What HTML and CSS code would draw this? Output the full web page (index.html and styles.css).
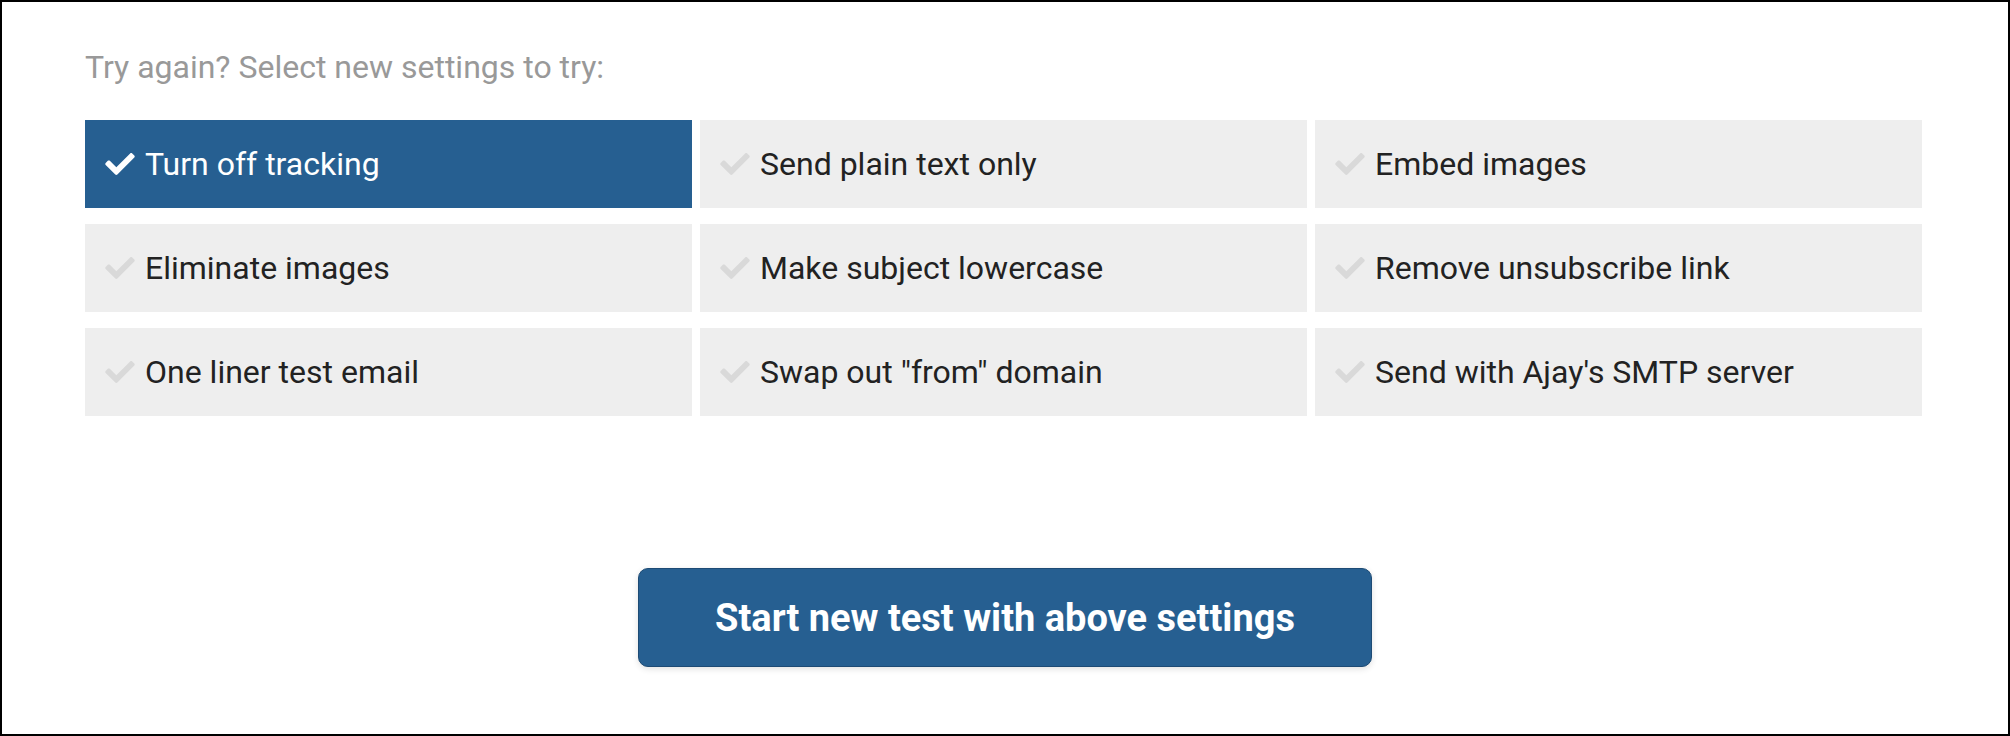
FILE: index.html
```html
<!DOCTYPE html>
<html>
<head>
<meta charset="utf-8">
<link rel="stylesheet" href="styles.css">
</head>
<body>
<div class="frame">
  <div class="content">
    <p class="title">Try again? Select new settings to try:</p>
    <div class="options">
      <div class="option selected"><svg class="check" viewBox="0 65 512 382"><path d="M173.898 439.404l-166.4-166.4c-9.997-9.997-9.997-26.206 0-36.204l36.203-36.204c9.997-9.998 26.207-9.998 36.204 0L192 312.69 432.095 72.596c9.997-9.997 26.207-9.997 36.204 0l36.203 36.204c9.997 9.997 9.997 26.206 0 36.204l-294.4 294.401c-9.998 9.997-26.207 9.997-36.204-.001z"/></svg><span>Turn off tracking</span></div>
      <div class="option"><svg class="check" viewBox="0 65 512 382"><path d="M173.898 439.404l-166.4-166.4c-9.997-9.997-9.997-26.206 0-36.204l36.203-36.204c9.997-9.998 26.207-9.998 36.204 0L192 312.69 432.095 72.596c9.997-9.997 26.207-9.997 36.204 0l36.203 36.204c9.997 9.997 9.997 26.206 0 36.204l-294.4 294.401c-9.998 9.997-26.207 9.997-36.204-.001z"/></svg><span>Send plain text only</span></div>
      <div class="option"><svg class="check" viewBox="0 65 512 382"><path d="M173.898 439.404l-166.4-166.4c-9.997-9.997-9.997-26.206 0-36.204l36.203-36.204c9.997-9.998 26.207-9.998 36.204 0L192 312.69 432.095 72.596c9.997-9.997 26.207-9.997 36.204 0l36.203 36.204c9.997 9.997 9.997 26.206 0 36.204l-294.4 294.401c-9.998 9.997-26.207 9.997-36.204-.001z"/></svg><span>Embed images</span></div>
      <div class="option"><svg class="check" viewBox="0 65 512 382"><path d="M173.898 439.404l-166.4-166.4c-9.997-9.997-9.997-26.206 0-36.204l36.203-36.204c9.997-9.998 26.207-9.998 36.204 0L192 312.69 432.095 72.596c9.997-9.997 26.207-9.997 36.204 0l36.203 36.204c9.997 9.997 9.997 26.206 0 36.204l-294.4 294.401c-9.998 9.997-26.207 9.997-36.204-.001z"/></svg><span>Eliminate images</span></div>
      <div class="option"><svg class="check" viewBox="0 65 512 382"><path d="M173.898 439.404l-166.4-166.4c-9.997-9.997-9.997-26.206 0-36.204l36.203-36.204c9.997-9.998 26.207-9.998 36.204 0L192 312.69 432.095 72.596c9.997-9.997 26.207-9.997 36.204 0l36.203 36.204c9.997 9.997 9.997 26.206 0 36.204l-294.4 294.401c-9.998 9.997-26.207 9.997-36.204-.001z"/></svg><span>Make subject lowercase</span></div>
      <div class="option"><svg class="check" viewBox="0 65 512 382"><path d="M173.898 439.404l-166.4-166.4c-9.997-9.997-9.997-26.206 0-36.204l36.203-36.204c9.997-9.998 26.207-9.998 36.204 0L192 312.69 432.095 72.596c9.997-9.997 26.207-9.997 36.204 0l36.203 36.204c9.997 9.997 9.997 26.206 0 36.204l-294.4 294.401c-9.998 9.997-26.207 9.997-36.204-.001z"/></svg><span>Remove unsubscribe link</span></div>
      <div class="option"><svg class="check" viewBox="0 65 512 382"><path d="M173.898 439.404l-166.4-166.4c-9.997-9.997-9.997-26.206 0-36.204l36.203-36.204c9.997-9.998 26.207-9.998 36.204 0L192 312.69 432.095 72.596c9.997-9.997 26.207-9.997 36.204 0l36.203 36.204c9.997 9.997 9.997 26.206 0 36.204l-294.4 294.401c-9.998 9.997-26.207 9.997-36.204-.001z"/></svg><span>One liner test email</span></div>
      <div class="option"><svg class="check" viewBox="0 65 512 382"><path d="M173.898 439.404l-166.4-166.4c-9.997-9.997-9.997-26.206 0-36.204l36.203-36.204c9.997-9.998 26.207-9.998 36.204 0L192 312.69 432.095 72.596c9.997-9.997 26.207-9.997 36.204 0l36.203 36.204c9.997 9.997 9.997 26.206 0 36.204l-294.4 294.401c-9.998 9.997-26.207 9.997-36.204-.001z"/></svg><span>Swap out "from" domain</span></div>
      <div class="option"><svg class="check" viewBox="0 65 512 382"><path d="M173.898 439.404l-166.4-166.4c-9.997-9.997-9.997-26.206 0-36.204l36.203-36.204c9.997-9.998 26.207-9.998 36.204 0L192 312.69 432.095 72.596c9.997-9.997 26.207-9.997 36.204 0l36.203 36.204c9.997 9.997 9.997 26.206 0 36.204l-294.4 294.401c-9.998 9.997-26.207 9.997-36.204-.001z"/></svg><span>Send with Ajay's SMTP server</span></div>
    </div>
    <div class="actions">
      <button class="start">Start new test with above settings</button>
    </div>
  </div>
</div>
</body>
</html>
```

FILE: styles.css
```css
* { box-sizing: border-box; }
html, body { margin: 0; padding: 0; background: #fff; }
body { font-family: Roboto, "Liberation Sans", sans-serif; }

.frame {
  width: 2010px;
  height: 736px;
  border: 2px solid #000;
  background: #fff;
}

.content {
  width: 1837px;
  margin-left: 83px;
  padding-top: 46px;
}

.title {
  margin: 0 0 34px 0;
  font-size: 32px;
  line-height: 38px;
  color: #999;
  font-weight: 400;
}

.options {
  display: grid;
  grid-template-columns: repeat(3, 1fr);
  column-gap: 8px;
  row-gap: 16px;
}

.option {
  height: 88px;
  background: #eee;
  display: flex;
  align-items: center;
  padding-left: 20px;
  font-size: 32px;
  color: #222;
}

.option .check {
  width: 30px;
  height: 22px;
  fill: #d9d9d9;
  margin-right: 10px;
  flex: none;
}

.option.selected {
  background: #265f91;
  color: #fff;
}

.option.selected .check { fill: #fff; }

.actions {
  display: flex;
  justify-content: center;
  margin-top: 152px;
  margin-left: -83px;
  width: 2006px;
}

.start {
  width: 734px;
  height: 99px;
  background: #265f91;
  border: 1px solid #1d4b75;
  border-radius: 10px;
  color: #fff;
  font-family: Roboto, "Liberation Sans", sans-serif;
  font-weight: 700;
  font-size: 38px;
  box-shadow: 0 2px 6px rgba(0,0,0,0.12);
  cursor: pointer;
}
```
